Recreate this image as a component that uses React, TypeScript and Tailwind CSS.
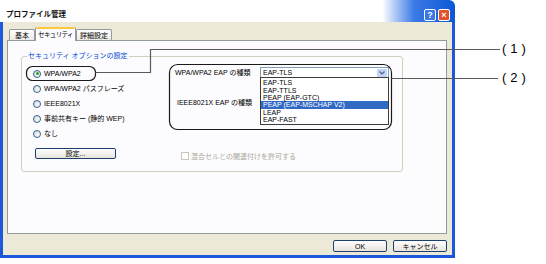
const eapTypes = ['EAP-TLS', 'EAP-TTLS', 'PEAP (EAP-GTC)', 'PEAP (EAP-MSCHAP V2)', 'LEAP', 'EAP-FAST'];

const securityOptions = [
  { label: 'WPA/WPA2', checked: true },
  { label: 'WPA/WPA2 パスフレーズ' },
  { label: 'IEEE8021X' },
  { label: '事前共有キー (静的 WEP)' },
  { label: 'なし' },
];

function Radio({ checked = false }: { checked?: boolean }) {
  return (
    <span className="flex h-[8px] w-[8px] shrink-0 items-center justify-center rounded-full border border-[#2f5f8f] bg-gradient-to-br from-[#dcdcd4] to-white">
      {checked && <span className="h-[3px] w-[3px] rounded-full bg-[#2ca02c]" />}
    </span>
  );
}

function XpButton({ label, className = '' }: { label: string; className?: string }) {
  return (
    <div
      className={`flex items-center justify-center whitespace-nowrap rounded-[2px] border border-[#1d3f6e] bg-gradient-to-b from-white to-[#e6e4dc] text-[7px] leading-none text-black ${className}`}
    >
      {label}
    </div>
  );
}

function TitleButtons() {
  return (
    <div className="flex gap-[2px]">
      <div className="flex h-[12px] w-[12px] items-center justify-center rounded-[2px] border border-white bg-[#3a78e8] text-[9px] font-bold leading-none text-white">
        ?
      </div>
      <div className="flex h-[12px] w-[12px] items-center justify-center rounded-[2px] border border-white bg-[#e0522a] text-[9px] font-bold leading-none text-white">
        ×
      </div>
    </div>
  );
}

function Dropdown() {
  return (
    <div className="relative flex h-[11px] w-[129px] items-center border border-[#7f9db9] bg-white">
      <span className="flex-1 pl-[2px] text-[7px] leading-none text-black">EAP-TLS</span>
      <span className="mr-[1px] flex h-[8px] w-[10px] items-center justify-center rounded-[1px] bg-[#c3d4fa]">
        <svg width="6" height="4" viewBox="0 0 6 4">
          <path d="M0.5 0.5 L3 3 L5.5 0.5" stroke="#4d6185" strokeWidth="1.2" fill="none" />
        </svg>
      </span>
      {/* open list */}
      <div className="absolute left-[-1px] top-full z-10 w-[129px] border border-[#3c3c3c] bg-white py-px">
        {eapTypes.map((t, i) => (
          <div
            key={t}
            className={`flex h-[7.4px] items-center whitespace-nowrap pl-[2px] text-[7px] leading-none ${i === 3 ? 'bg-[#316ac5] text-white' : 'text-black'}`}
          >
            {t}
          </div>
        ))}
      </div>
    </div>
  );
}

function Callouts() {
  return (
    <>
      <svg className="pointer-events-none absolute left-0 top-0 z-20" width="546" height="264">
        <rect x="26.5" y="66.5" width="69" height="14" rx="6" fill="none" stroke="#1a1a1a" strokeWidth="1.2" />
        <path d="M95.5 72.5 H150.5 V49.5 H500" fill="none" stroke="#5a5a5a" strokeWidth="1.2" />
        <rect x="169.5" y="64.5" width="222" height="65" rx="8" fill="none" stroke="#1a1a1a" strokeWidth="1.2" />
        <path d="M391.5 78.5 H498" fill="none" stroke="#5a5a5a" strokeWidth="1.2" />
      </svg>
      <span className="absolute left-[502px] top-[41px] z-20 text-[13px] leading-[16px] tracking-[4px] text-black">(1)</span>
      <span className="absolute left-[502px] top-[70px] z-20 text-[13px] leading-[16px] tracking-[4px] text-black">(2)</span>
    </>
  );
}

export default function App() {
  return (
    <div className="relative h-[264px] w-[546px] overflow-hidden bg-white font-['Liberation_Sans','Noto_Sans_CJK_JP',sans-serif]">
      {/* window */}
      <div className="flex h-[258px] w-[455px] flex-col">
        <div className="flex h-[22px] items-center justify-between rounded-tr-[6px] bg-[linear-gradient(to_right,#ffffff_0%,#ffffff_84%,#3c7ae6_91%,#0b57d6_100%)] pb-[1px] pl-[6px] pr-[5px] pt-[9px]">
          <span className="whitespace-nowrap text-[7.5px] font-bold leading-none text-[#111]">プロファイル管理</span>
          <TitleButtons />
        </div>

        <div className="flex flex-1 flex-col border-x-[3px] border-b-[3px] border-[#1c58dc] bg-[#ece9d8] pt-[5px]">
          {/* tabs */}
          <div className="flex h-[13px] items-end pl-[6px]">
            <div className="flex h-[11px] w-[26px] items-center justify-center whitespace-nowrap rounded-t-[2px] border border-b-0 border-[#919b9c] bg-gradient-to-b from-white to-[#ecebe5] text-[7px] leading-none">
              基本
            </div>
            <div className="relative z-10 -mb-px flex h-[14px] w-[41px] flex-col rounded-t-[2px] border-x border-[#919b9c] bg-[#fcfcfe]">
              <div className="h-[2px] rounded-t-[2px] bg-[#ffc83c]" />
              <div className="flex flex-1 items-center justify-center whitespace-nowrap text-[6.5px] leading-none tracking-[-0.6px]">
                セキュリティ
              </div>
            </div>
            <div className="flex h-[11px] w-[36px] items-center justify-center whitespace-nowrap rounded-t-[2px] border border-b-0 border-[#919b9c] bg-gradient-to-b from-white to-[#ecebe5] text-[7px] leading-none">
              詳細設定
            </div>
          </div>

          {/* panel */}
          <div className="ml-[4px] mr-[5px] h-[194px] border border-[#919b9c] bg-[#fcfcfe]">
            <div className="relative ml-[13px] mt-[15px] flex h-[116px] w-[382px] rounded-[3px] border border-[#d0d0bf]">
              <span className="absolute -top-[6px] left-[5px] whitespace-nowrap bg-[#fcfcfe] px-px text-[7px] leading-[9px] text-[#0046d5]">
                セキュリティ オプションの設定
              </span>

              <div className="flex w-[153px] flex-col pl-[11px] pt-[9px]">
                {securityOptions.map((o) => (
                  <div key={o.label} className="flex h-[15px] items-center gap-[3px] whitespace-nowrap text-[7px] leading-none text-black">
                    <Radio checked={o.checked} />
                    <span>{o.label}</span>
                  </div>
                ))}
                <XpButton label="設定..." className="ml-[2px] mt-[7px] h-[11px] w-[81px]" />
              </div>

              <div className="flex flex-col pt-[10px]">
                <div className="flex h-[11px] items-center whitespace-nowrap text-[7px] leading-none">
                  <span className="w-[85px]">WPA/WPA2 EAP の種類</span>
                  <Dropdown />
                </div>
                <div className="mt-[19px] flex h-[11px] items-center whitespace-nowrap pl-[2px] text-[7px] leading-none">
                  IEEE8021X EAP の種類
                </div>
                <div className="mt-[43px] flex h-[10px] items-center gap-[2px] whitespace-nowrap pl-[6px] text-[7px] leading-none text-[#aca899]">
                  <span className="h-[8px] w-[8px] border border-[#c9c7ba] bg-white" />
                  <span>混合セルとの関連付けを許可する</span>
                </div>
              </div>
            </div>
          </div>

          {/* dialog buttons */}
          <div className="mr-[5px] mt-[6px] flex justify-end gap-[6px]">
            <XpButton label="OK" className="h-[12px] w-[54px]" />
            <XpButton label="キャンセル" className="h-[12px] w-[54px]" />
          </div>
        </div>
      </div>

      <Callouts />
    </div>
  );
}
